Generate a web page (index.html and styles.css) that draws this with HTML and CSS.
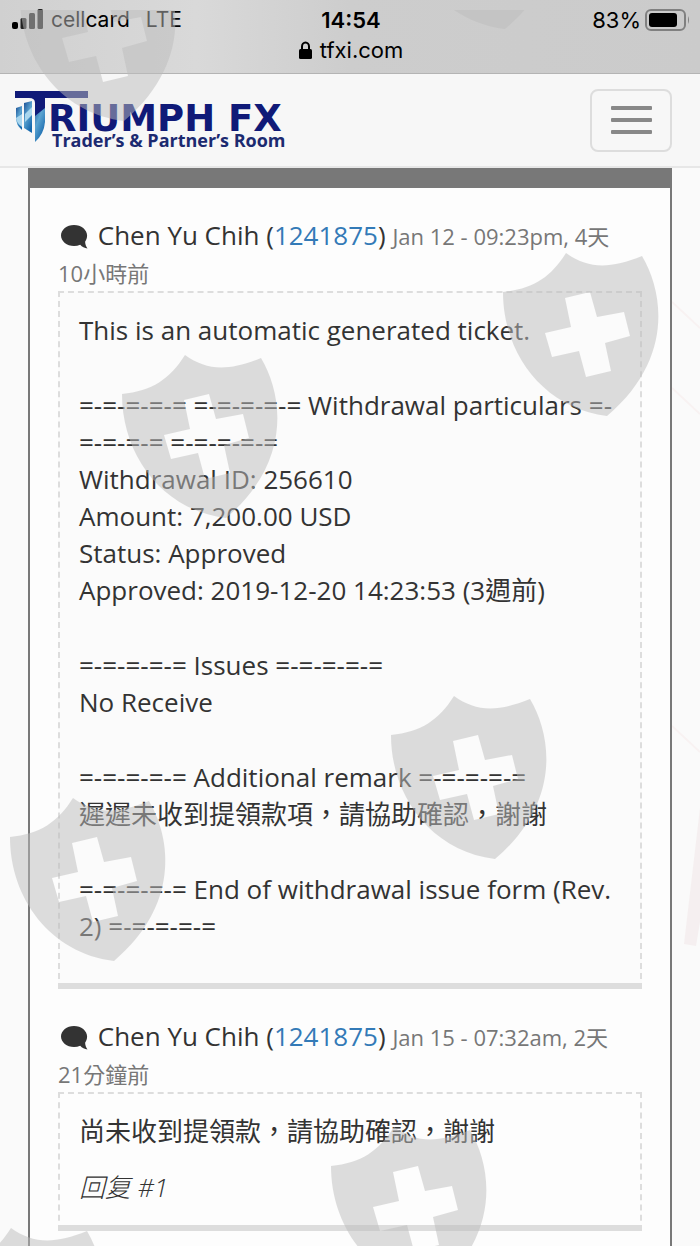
FILE: index.html
```html
<!DOCTYPE html>
<html lang="zh-Hant">
<head>
    <meta charset="UTF-8">
    <meta name="viewport" content="width=device-width, initial-scale=1.0">
    <title>Triumph FX</title>
    <link rel="stylesheet" href="styles.css">
</head>
<body>

<!-- Status bar -->
<header class="status">
    <div class="status-row">
        <div class="carrier">
            <svg class="signal" width="31" height="20" viewBox="0 0 31 20" fill="#222">
                <rect x="0" y="13" width="6" height="7" rx="2" fill="#000"/>
                <rect x="8.500" y="9" width="6" height="11" rx="1.500"/>
                <rect x="17" y="4" width="6" height="16" rx="1.500"/>
                <rect x="25.500" y="0" width="5.500" height="20" rx="1.500"/>
            </svg>
            <span>cellcard</span>
            <span class="network">LTE</span>
        </div>
        <div class="time">14:54</div>
        <div class="battery">
            <span>83%</span>
            <svg width="45" height="22" viewBox="0 0 45 22">
                <rect x="1" y="1" width="39" height="20" rx="5" fill="none" stroke="#808080" stroke-width="2"/>
                <rect x="4" y="4" width="28" height="14" rx="3" fill="#000"/>
                <path d="M43 7q2 4 0 8z" fill="#808080"/>
            </svg>
        </div>
    </div>
    <div class="address">
        <svg width="13" height="18" viewBox="0 0 13 18">
            <path d="M3 9V5.500a3.500 4 0 0 1 7 0V9" fill="none" stroke="#000" stroke-width="2"/>
            <rect x="0" y="8" width="13" height="10" rx="1.500"/>
        </svg>
        <span>tfxi.com</span>
    </div>
</header>

<!-- Navbar -->
<nav class="navbar">
    <a class="logo" href="#" aria-label="Triumph FX">
        <svg width="290" height="68" viewBox="0 0 290 68">
            <defs>
                <linearGradient id="crest" x1="0" y1="0" x2="0.600" y2="1">
                    <stop offset="0" stop-color="#1b4f94"/>
                    <stop offset="0.500" stop-color="#5ba3d0"/>
                    <stop offset="1" stop-color="#1668ad"/>
                </linearGradient>
            </defs>
            <path d="M2 22l6-2v24q-6-5-6-12z" fill="url(#crest)"/>
            <path d="M2 32l6-4v13q-5-3-6-9z" fill="#a9d6ee"/>
            <path d="M10 17l8-2v32l-8-5z" fill="url(#crest)"/>
            <path d="M11 28l7-7v8l-7 7z" fill="#a9d6ee"/>
            <path d="M21 14h10v22q-1 12-10 20z" fill="url(#crest)"/>
            <path d="M1 5h73v7H31v10l-10 8V17q0-5-6-5H1z" fill="#101a78"/>
            <text class="logo-name" x="34" y="45">RIUMPH FX</text>
            <text class="logo-sub" x="38" y="61">Trader’s &amp; Partner’s Room</text>
        </svg>
    </a>
    <button class="toggle" type="button" aria-label="Menu">
        <span class="bar"></span>
        <span class="bar"></span>
        <span class="bar"></span>
    </button>
</nav>

<!-- Ticket -->
<main class="page">
    <svg class="page-art" width="28" height="900" viewBox="0 0 28 900">
        <path d="M0 134l28 26M0 220l28 26M0 558l28 26" stroke="#f8f2f2" stroke-width="2"/>
        <path d="M28 640l-16 136 12 2 4-24z" fill="#f5eff0"/>
    </svg>
    <section class="panel">
        <article class="reply">
            <div class="reply-head">
                <svg class="bubble" width="27" height="24" viewBox="0 0 27 24">
                    <path d="M13 0C5.800 0 0 4.700 0 10.500S5.800 21 13 21c2.300 0 4.300-.4 6.200-1.200 1.800 2 4.400 3.400 7.300 3.600-1.400-1.600-2.200-3.900-2.400-6.700 1.300-1.800 2-3.900 2-6.200C26.100 4.700 20.200 0 13 0z" fill="#333"/>
                </svg>
                Chen Yu Chih (<a href="#">1241875</a>)
                <small>Jan 12 - 09:23pm, 4天<span class="ago">10小時前</span></small>
            </div>
            <div class="reply-body">
                <p>This is an automatic generated ticket.</p>
                <p>
                    =-=-=-=-= =-=-=-=-= Withdrawal particulars =-=-=-=-= =-=-=-=-=<br>
                    Withdrawal ID: 256610<br>
                    Amount: 7,200.00 USD<br>
                    Status: Approved<br>
                    Approved: 2019-12-20 14:23:53 (3週前)
                </p>
                <p>
                    =-=-=-=-= Issues =-=-=-=-=<br>
                    No Receive
                </p>
                <p>
                    =-=-=-=-= Additional remark =-=-=-=-=<br>
                    遲遲未收到提領款項，請協助確認，謝謝
                </p>
                <p>=-=-=-=-= End of withdrawal issue form (Rev. 2) =-=-=-=-=</p>
            </div>
        </article>

        <article class="reply">
            <div class="reply-head">
                <svg class="bubble" width="27" height="24" viewBox="0 0 27 24">
                    <path d="M13 0C5.800 0 0 4.700 0 10.500S5.800 21 13 21c2.300 0 4.300-.4 6.200-1.200 1.800 2 4.400 3.400 7.300 3.600-1.400-1.600-2.200-3.900-2.400-6.700 1.300-1.800 2-3.900 2-6.200C26.100 4.700 20.200 0 13 0z" fill="#333"/>
                </svg>
                Chen Yu Chih (<a href="#">1241875</a>)
                <small>Jan 15 - 07:32am, 2天<span class="ago">21分鐘前</span></small>
            </div>
            <div class="reply-body short">
                <p>尚未收到提領款，請協助確認，謝謝</p>
                <p class="reply-no">回复 #1</p>
            </div>
        </article>
    </section>
</main>

<!-- Shield watermark over the whole page -->
<svg class="watermark" aria-hidden="true">
    <defs>
        <path id="shield" fill-rule="evenodd" d="M0 39C30 36 48 24 63 0C85 16 107 16 139 3C162 42 169 108 104 163C40 155 0 100 0 39zM62 45L87 39L94 64L121 59L127 83L102 90L108 118L83 124L76 98L49 104L42 80L68 74z"/>
    </defs>
    <g transform="translate(0 -10)">
        <use href="#shield" x="20" y="-42"/>
        <use href="#shield" x="401" y="-134"/>
        <use href="#shield" x="503" y="253"/>
        <use href="#shield" x="122" y="355"/>
        <use href="#shield" x="391" y="696"/>
        <use href="#shield" x="10" y="798"/>
        <use href="#shield" x="331" y="1127"/>
        <use href="#shield" x="-52" y="1228"/>
    </g>
</svg>

</body>
</html>
```
FILE: styles.css
```css
* {
    box-sizing: border-box;
}
body {
    position: relative;
    display: flex;
    flex-direction: column;
    min-height: 100vh;
    margin: 0;
    font-family: "Open Sans", "Noto Sans CJK TC", sans-serif;
    font-size: 26px;
    line-height: 37px;
    color: #333;
    background: #fafafa;
    overflow-x: hidden;
}
svg {
    flex: none;
}

/* Status bar */
.status {
    padding: 5px 10px 8px 12px;
    font-family: Inter, sans-serif;
    font-size: 22px;
    line-height: 30px;
    color: #000;
    background: linear-gradient(90deg, #d0d0d0, #d9d9d9 28%, #cdcdcd 50%, #cbcbcb);
    border-bottom: 1px solid #b4b4b4;
}
.status-row {
    display: grid;
    grid-template-columns: 1fr auto 1fr;
    align-items: center;
}
.carrier,
.battery,
.address {
    display: flex;
    align-items: center;
    gap: 8px;
}
.signal {
    margin-bottom: 2px;
}
.network {
    margin-left: 8px;
}
.carrier {
    font-size: 21px;
}
.time {
    font-weight: 600;
}
.battery {
    justify-content: flex-end;
    gap: 4px;
}
.address {
    justify-content: center;
}

/* Navbar */
.navbar {
    display: flex;
    align-items: center;
    justify-content: space-between;
    height: 94px;
    padding: 0 28px 0 14px;
    background: #f7f7f7;
    border-bottom: 2px solid #e7e7e7;
}
.logo {
    display: flex;
}
.logo-name {
    font: bold 37px "DejaVu Sans", sans-serif;
    fill: #101a78;
}
.logo-sub {
    font: bold 18px "Open Sans", sans-serif;
    fill: #1c2a70;
}
.toggle {
    display: flex;
    flex-direction: column;
    align-items: center;
    justify-content: center;
    gap: 8px;
    width: 82px;
    height: 63px;
    background: transparent;
    border: 2px solid #ddd;
    border-radius: 8px;
    cursor: pointer;
}
.bar {
    width: 41px;
    height: 4px;
    border-radius: 1px;
    background: #888;
}

/* Ticket */
.page {
    position: relative;
    display: flex;
    flex: 1;
    padding: 0 28px;
}
.page-art {
    position: absolute;
    top: 0;
    right: 0;
}
.panel {
    position: relative;
    flex: 1;
    min-width: 0;
    padding: 0 28px;
    background: #fdfdfd;
    border: 2px solid #787878;
    border-top-width: 20px;
    border-bottom: 0;
}
.reply {
    padding-top: 29px;
}
.bubble {
    margin: 0 3px;
    vertical-align: -4px;
}
.reply-head a {
    color: #337ab7;
    text-decoration: none;
}
.reply-head small {
    font-size: 22px;
    line-height: 30px;
    color: #777;
}
.ago {
    white-space: nowrap;
}
.reply-body {
    padding: 19px;
    background: #fbfbfb;
    border: 2px dashed #ddd;
    border-bottom: 6px solid #ddd;
}
.reply-body p {
    margin: 0 0 38px;
}
.reply-body p:last-child {
    margin-bottom: 19px;
}
.short {
    background: #fdfdfd;
}
.short p {
    margin-bottom: 19px;
}
.short p:last-child {
    margin-bottom: 0;
}
.reply-no {
    font-style: italic;
    font-weight: 300;
}

/* Watermark */
.watermark {
    position: absolute;
    top: 10px;
    left: 0;
    width: 100%;
    height: calc(100% - 10px);
    overflow: hidden;
    fill: #bdbdbd;
    opacity: 0.5;
    pointer-events: none;
}
```
